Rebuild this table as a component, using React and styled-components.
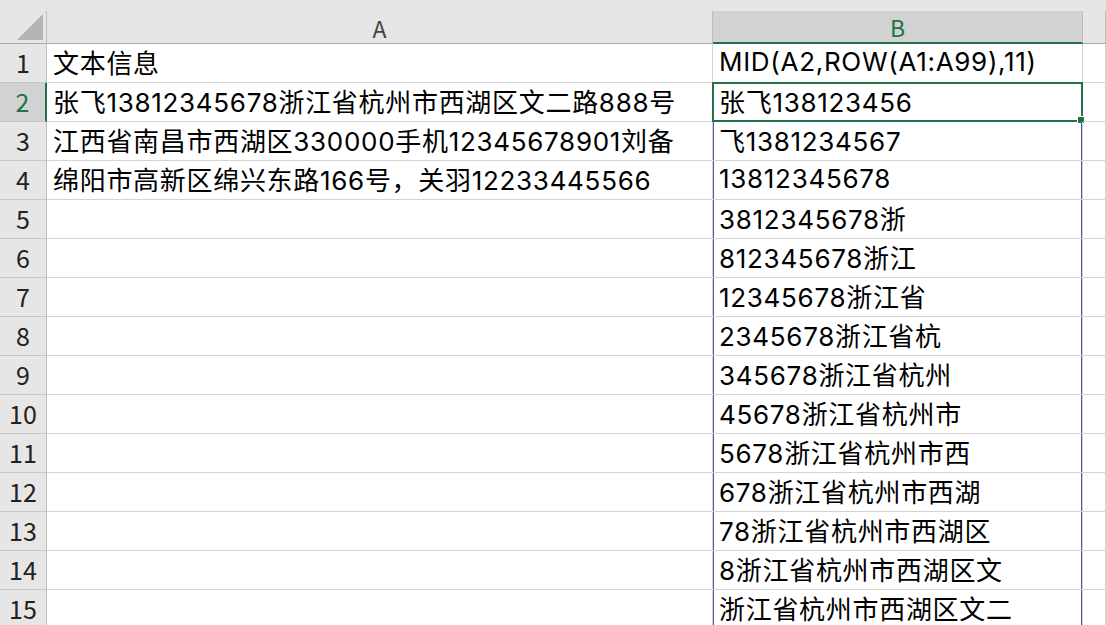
import React from 'react';
import styled, { createGlobalStyle } from 'styled-components';

const GlobalStyle = createGlobalStyle`
  html, body {
    margin: 0;
    padding: 0;
    background: #ffffff;
    overflow: hidden;
  }
  body {
    font-family: "Noto Sans CJK SC", "Noto Sans", sans-serif;
  }
`;

const GREEN = '#217346';
const GRID = '#d4d4d4';
const SPILL = '#4a5ca6';

const Page = styled.div`
  width: 1106px;
  height: 625px;
  overflow: hidden;
  background: #fff;
`;

const TopStrip = styled.div`
  height: 11px;
  background: #e6e6e6;
`;

const Sheet = styled.div`
  display: grid;
  grid-template-columns: 47px 666px 370px 23px;
  grid-template-rows: 33px;
  grid-auto-rows: 39px;
`;

const Corner = styled.div`
  position: relative;
  background: #e6e6e6;
  border-right: 1px solid #bdbdbd;
  border-bottom: 1px solid #ababab;
  box-sizing: border-box;
  &::after {
    content: '';
    position: absolute;
    right: 3px;
    bottom: 3px;
    width: 0;
    height: 0;
    border-left: 26px solid transparent;
    border-bottom: 26px solid #b4b4b4;
  }
`;

const ColHead = styled.div`
  box-sizing: border-box;
  display: flex;
  align-items: center;
  justify-content: center;
  background: ${(p) => (p.$active ? '#d2d2d2' : '#e6e6e6')};
  color: ${(p) => (p.$active ? GREEN : '#444')};
  border-right: 1px solid #bdbdbd;
  border-bottom: ${(p) => (p.$active ? `2px solid ${GREEN}` : '1px solid #ababab')};
  font-size: 23px;
  padding-top: 1px;
`;

const RowHead = styled.div`
  box-sizing: border-box;
  display: flex;
  align-items: center;
  justify-content: center;
  background: ${(p) => (p.$active ? '#d2d2d2' : '#e6e6e6')};
  color: ${(p) => (p.$active ? GREEN : '#222')};
  border-right: ${(p) => (p.$active ? `2px solid ${GREEN}` : '1px solid #bdbdbd')};
  border-bottom: 1px solid #c6c6c6;
  font-size: 25px;
  padding-bottom: 2px;
`;

const Cell = styled.div`
  position: relative;
  box-sizing: border-box;
  display: flex;
  align-items: center;
  padding: 0 0 3px 6px;
  border-right: 1px solid ${GRID};
  border-bottom: 1px solid ${GRID};
  box-shadow: ${(p) =>
    p.$spill ? `inset 1px 0 0 ${SPILL}, inset -1px 0 0 ${SPILL}` : 'none'};
  font-family: Inter, "Noto Sans CJK SC", sans-serif;
  font-size: 26px;
  letter-spacing: 0.7px;
  color: #000;
  white-space: nowrap;
  overflow: visible;
`;

const Selection = styled.div`
  position: absolute;
  left: -1px;
  top: -1px;
  right: -1px;
  bottom: -1px;
  border: 2px solid ${GREEN};
  pointer-events: none;
`;

const FillHandle = styled.div`
  position: absolute;
  right: -4px;
  bottom: -4px;
  width: 6px;
  height: 6px;
  background: ${GREEN};
  border: 1px solid #fff;
`;

const colA = [
  '文本信息',
  '张飞13812345678浙江省杭州市西湖区文二路888号',
  '江西省南昌市西湖区330000手机12345678901刘备',
  '绵阳市高新区绵兴东路166号，关羽12233445566',
];

const source = '张飞13812345678浙江省杭州市西湖区文二路888号';
const colB = ['MID(A2,ROW(A1:A99),11)'];
for (let i = 0; i < 14; i++) colB.push(Array.from(source).slice(i, i + 11).join(''));

export default function App() {
  const rows = Array.from({ length: 15 }, (_, i) => i + 1);
  return (
    <Page>
      <GlobalStyle />
      <TopStrip />
      <Sheet>
        <Corner />
        <ColHead>A</ColHead>
        <ColHead $active>B</ColHead>
        <ColHead />
        {rows.map((r) => (
          <React.Fragment key={r}>
            <RowHead $active={r === 2}>{r}</RowHead>
            <Cell>{colA[r - 1] || ''}</Cell>
            <Cell $spill={r >= 2}>
              {colB[r - 1]}
              {r === 2 && (
                <Selection>
                  <FillHandle />
                </Selection>
              )}
            </Cell>
            <Cell />
          </React.Fragment>
        ))}
      </Sheet>
    </Page>
  );
}
